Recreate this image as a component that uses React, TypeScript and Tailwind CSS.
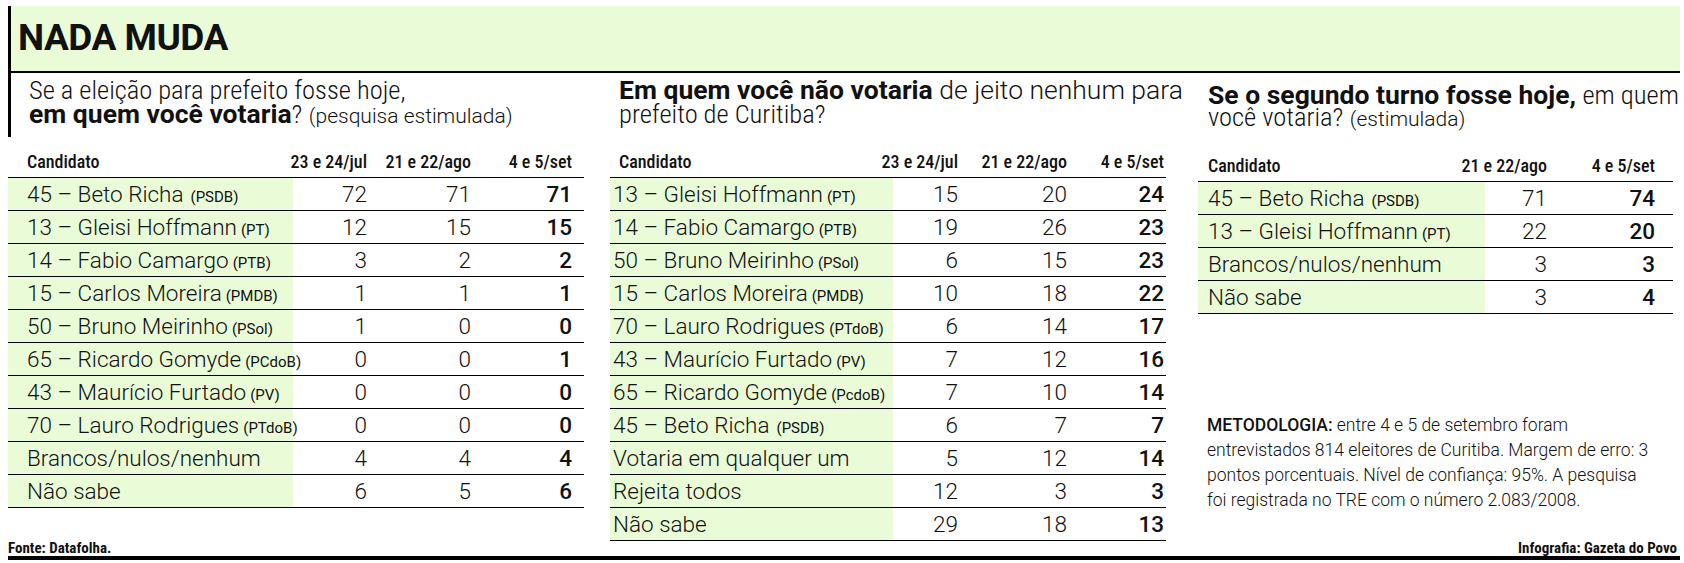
import React from "react";

type Row = { name: string; party?: string; gap?: boolean; v: string[] };

const leftRows: Row[] = [
  { name: "45 – Beto Richa", party: "(PSDB)", gap: true, v: ["72", "71", "71"] },
  { name: "13 – Gleisi Hoffmann", party: "(PT)", v: ["12", "15", "15"] },
  { name: "14 – Fabio Camargo", party: "(PTB)", v: ["3", "2", "2"] },
  { name: "15 – Carlos Moreira", party: "(PMDB)", v: ["1", "1", "1"] },
  { name: "50 – Bruno Meirinho", party: "(PSol)", v: ["1", "0", "0"] },
  { name: "65 – Ricardo Gomyde", party: "(PCdoB)", v: ["0", "0", "1"] },
  { name: "43 – Maurício Furtado", party: "(PV)", v: ["0", "0", "0"] },
  { name: "70 – Lauro Rodrigues", party: "(PTdoB)", v: ["0", "0", "0"] },
  { name: "Brancos/nulos/nenhum", v: ["4", "4", "4"] },
  { name: "Não sabe", v: ["6", "5", "6"] },
];

const midRows: Row[] = [
  { name: "13 – Gleisi Hoffmann", party: "(PT)", v: ["15", "20", "24"] },
  { name: "14 – Fabio Camargo", party: "(PTB)", v: ["19", "26", "23"] },
  { name: "50 – Bruno Meirinho", party: "(PSol)", v: ["6", "15", "23"] },
  { name: "15 – Carlos Moreira", party: "(PMDB)", v: ["10", "18", "22"] },
  { name: "70 – Lauro Rodrigues", party: "(PTdoB)", v: ["6", "14", "17"] },
  { name: "43 – Maurício Furtado", party: "(PV)", v: ["7", "12", "16"] },
  { name: "65 – Ricardo Gomyde", party: "(PcdoB)", v: ["7", "10", "14"] },
  { name: "45 – Beto Richa", party: "(PSDB)", gap: true, v: ["6", "7", "7"] },
  { name: "Votaria em qualquer um", v: ["5", "12", "14"] },
  { name: "Rejeita todos", v: ["12", "3", "3"] },
  { name: "Não sabe", v: ["29", "18", "13"] },
];

const rightRows: Row[] = [
  { name: "45 – Beto Richa", party: "(PSDB)", gap: true, v: ["71", "74"] },
  { name: "13 – Gleisi Hoffmann", party: "(PT)", v: ["22", "20"] },
  { name: "Brancos/nulos/nenhum", v: ["3", "3"] },
  { name: "Não sabe", v: ["3", "4"] },
];

type TableProps = {
  rows: Row[];
  headers: string[];
  labelCls: string;
  headLabelCls: string;
  colCls: string[];
  padCls: string;
};

function Label({ r }: { r: Row }) {
  return (
    <>
      <span className="font-stretch-[92%]">{r.name}</span>
      {r.party && (
        <span
          className={
            r.gap
              ? "ml-[7px] text-[15px] font-normal font-stretch-[88%]"
              : "ml-[4px] text-[15px] font-normal font-stretch-[88%]"
          }
        >
          {r.party}
        </span>
      )}
    </>
  );
}

function DataTable({ rows, headers, labelCls, headLabelCls, colCls, padCls }: TableProps) {
  return (
    <div>
      <div className="flex h-[41px] items-end border-b border-black pb-[5px] text-[18px] leading-[20px] font-medium">
        <div className={`${headLabelCls} font-stretch-[82%]`}>Candidato</div>
        {headers.map((h, i) => (
          <div key={h} className={`${colCls[i]} flex justify-end whitespace-nowrap font-stretch-[82%]`}>
            {h}
          </div>
        ))}
        <div className={padCls} />
      </div>
      {rows.map((r) => (
        <div key={r.name} className="flex h-[33px] border-b border-black text-[22.5px] leading-[32px] font-light">
          <div className={`${labelCls} bg-[#e9fbd7] whitespace-nowrap`}>
            <Label r={r} />
          </div>
          {r.v.map((v, i) => (
            <div
              key={i}
              className={
                i === r.v.length - 1
                  ? `${colCls[i]} text-right font-medium`
                  : `${colCls[i]} text-right`
              }
            >
              {v}
            </div>
          ))}
          <div className={padCls} />
        </div>
      ))}
    </div>
  );
}

export default function App() {
  return (
    <div className="w-[1684px] h-[563px] overflow-hidden bg-white pt-[6px] font-[Roboto,sans-serif] text-[#111]">
      <div className="ml-[8px] h-[67px] w-[1672px] border-b-2 border-l-[3px] border-black bg-[#e9fbd7] pl-[7px] pt-[13px]">
        <div className="text-[37px] leading-[38px] font-bold font-stretch-[95%] tracking-[-0.5px]">NADA MUDA</div>
      </div>

      <div className="flex h-[468px] pl-[8px]">
        <div className="w-[576px]">
          <div className="h-[64px] border-l-[3px] border-black pl-[18px] pt-[5px] text-[26.5px] leading-[24px] font-light whitespace-nowrap">
            <span className="font-stretch-[82%]">Se a eleição para prefeito fosse hoje,</span>
            <br />
            <span className="font-bold">em quem você votaria</span>
            <span className="font-stretch-[86%]">?</span>{" "}
            <span className="text-[21px] font-stretch-[90%]">(pesquisa estimulada)</span>
          </div>
          <DataTable
            rows={leftRows}
            headers={["23 e 24/jul", "21 e 22/ago", "4 e 5/set"]}
            headLabelCls="w-[285px] pl-[19px]"
            labelCls="w-[285px] pl-[19px]"
            colCls={["w-[74px]", "w-[104px]", "w-[101px]"]}
            padCls="w-[12px]"
          />
        </div>

        <div className="ml-[26px] w-[556px]">
          <div className="h-[64px] pl-[9px] pt-[5px] text-[26.5px] leading-[24px] font-light whitespace-nowrap">
            <span className="font-bold">Em quem você não votaria</span>{" "}
            <span className="font-stretch-[88%]">de jeito nenhum para</span>
            <br />
            <span className="font-stretch-[84%]">prefeito de Curitiba?</span>
          </div>
          <DataTable
            rows={midRows}
            headers={["23 e 24/jul", "21 e 22/ago", "4 e 5/set"]}
            headLabelCls="w-[283px] pl-[9px]"
            labelCls="w-[283px] pl-[3px]"
            colCls={["w-[65px]", "w-[109px]", "w-[97px]"]}
            padCls="w-[2px]"
          />
        </div>

        <div className="ml-[32px] w-[475px]">
          <div className="h-[68px] pl-[10px] pt-[11px] text-[26.5px] leading-[22px] font-light whitespace-nowrap">
            <span className="font-bold">Se o segundo turno fosse hoje,</span>{" "}
            <span className="font-stretch-[86%]">em quem</span>
            <br />
            <span className="font-stretch-[86%]">você votaria?</span>{" "}
            <span className="text-[21px] font-stretch-[90%]">(estimulada)</span>
          </div>
          <DataTable
            rows={rightRows}
            headers={["21 e 22/ago", "4 e 5/set"]}
            headLabelCls="w-[287px] pl-[10px]"
            labelCls="w-[287px] pl-[10px]"
            colCls={["w-[62px]", "w-[108px]"]}
            padCls="w-[18px]"
          />
          <div className="mt-[99px] pl-[9px] text-[17.5px] leading-[25px] font-light whitespace-nowrap">
            <span className="font-medium">METODOLOGIA:</span> entre 4 e 5 de setembro foram
            <br />
            entrevistados 814 eleitores de Curitiba. Margem de erro: 3
            <br />
            pontos porcentuais. Nível de confiança: 95%. A pesquisa
            <br />
            foi registrada no TRE com o número 2.083/2008.
          </div>
        </div>
      </div>

      <div className="ml-[8px] flex h-[15px] w-[1672px] items-end justify-between pr-[3px] text-[15px] leading-[15px] font-bold font-stretch-[86%]">
        <span>Fonte: Datafolha.</span>
        <span>Infografia: Gazeta do Povo</span>
      </div>
      <div className="ml-[8px] h-[4px] w-[1672px] bg-black" />
    </div>
  );
}
